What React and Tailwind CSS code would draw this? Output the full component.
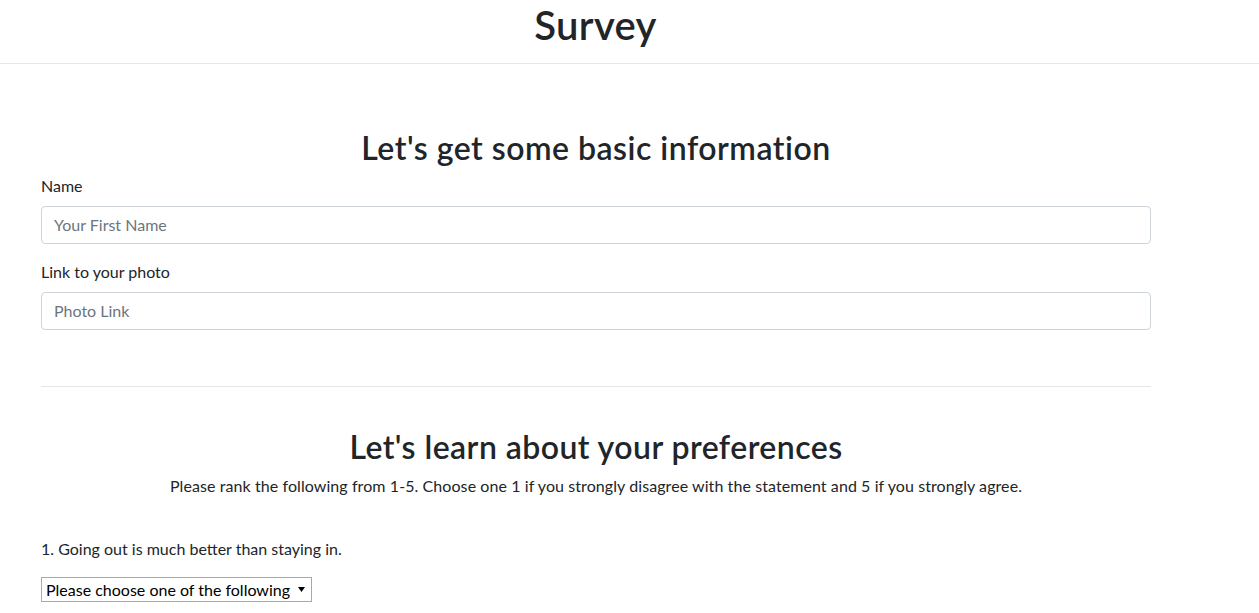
export default function App() {
  return (
    <div className="min-h-screen bg-white text-[#212529] font-['Lato','Noto_Sans',sans-serif]">
      {/* Header */}
      <div className="border-b border-[#e6e6e6] pb-[14px]">
        <h1 className="text-center text-[40px] leading-[48px] font-semibold pt-[1px] pr-[68px] tracking-[0.3px]">Survey</h1>
      </div>

      <div className="pl-[41px]">
        <div className="w-[1110px]">
          {/* Basic info */}
          <div className="pt-[65px] pb-[40px]">
            <h2 className="text-center text-[32px] leading-[38px] font-semibold mb-[7px] tracking-[0.5px]">
              Let's get some basic information
            </h2>
            <div className="mb-[16px]">
              <label className="block text-[16px] leading-[24px] mb-[8px]">Name</label>
              <input
                type="text"
                placeholder="Your First Name"
                className="block w-full h-[38px] px-[12px] pb-[1px] text-[16px] border border-[#ced4da] rounded-[4px] placeholder:text-[#6c757d] outline-none"
              />
            </div>
            <div className="mb-[16px]">
              <label className="block text-[16px] leading-[24px] mb-[8px]">Link to your photo</label>
              <input
                type="text"
                placeholder="Photo Link"
                className="block w-full h-[38px] px-[12px] pb-[1px] text-[16px] border border-[#ced4da] rounded-[4px] placeholder:text-[#6c757d] outline-none"
              />
            </div>
          </div>

          <hr className="border-0 border-t border-[#e5e5e5]" />

          {/* Preferences */}
          <div className="pt-[41px]">
            <h2 className="text-center text-[32px] leading-[38px] font-semibold mb-[8px] tracking-[0.45px]">
              Let's learn about your preferences
            </h2>
            <p className="text-center text-[16px] leading-[24px] mb-[39px] tracking-[0.08px]">
              Please rank the following from 1-5. Choose one 1 if you strongly disagree with the statement and 5 if you strongly agree.
            </p>
            <p className="text-[16px] leading-[24px] mb-[16px]">1. Going out is much better than staying in.</p>
            <div className="inline-flex items-center h-[25px] w-[271px] border border-[#a9a9a9] pl-[4px] pr-[6px] text-[16px] leading-[20px] text-black">
              <span className="flex-1">Please choose one of the following</span>
              <svg width="7" height="5" viewBox="0 0 7 5">
                <path d="M0 0h7L3.5 5z" fill="#000" />
              </svg>
            </div>
          </div>
        </div>
      </div>
    </div>
  )
}
